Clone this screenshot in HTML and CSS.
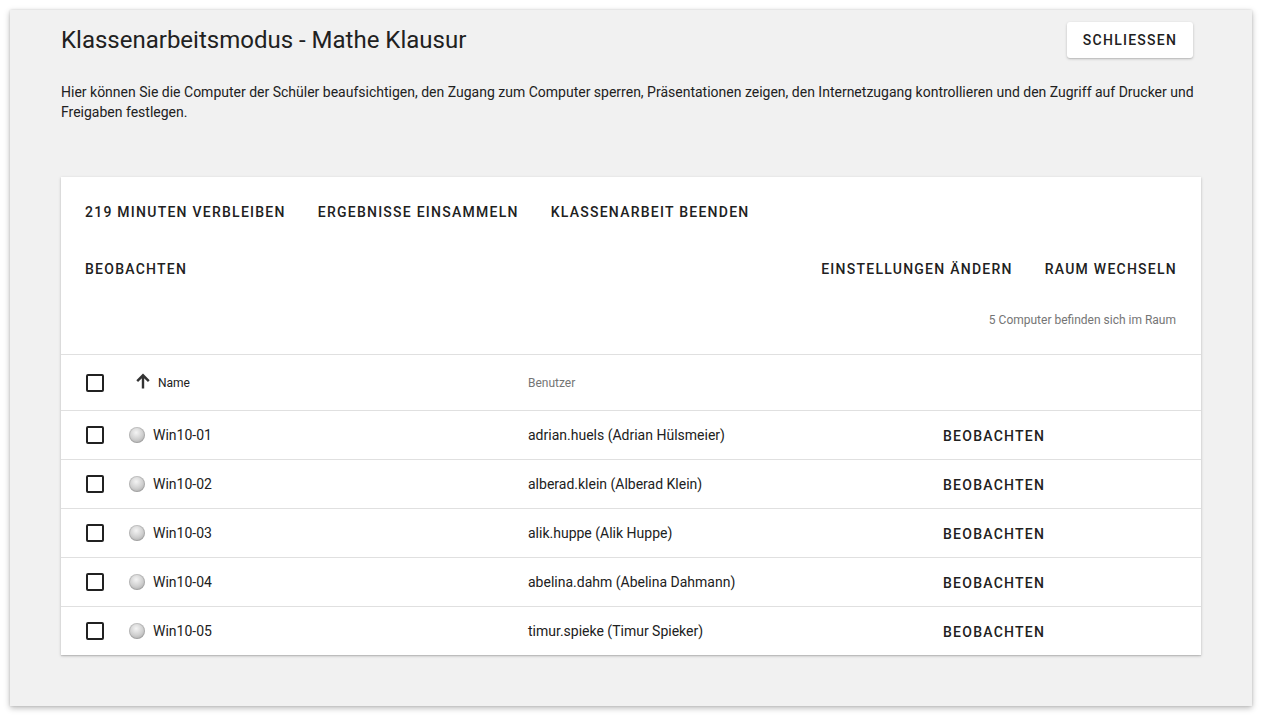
FILE: index.html
```html
<!DOCTYPE html>
<html lang="de">
<head>
<meta charset="utf-8">
<title>Klassenarbeitsmodus</title>
<link rel="stylesheet" href="styles.css">
</head>
<body>
<div class="dialog">
  <div class="header">
    <h1 class="title">Klassenarbeitsmodus - Mathe Klausur</h1>
    <button class="close-btn">SCHLIESSEN</button>
  </div>
  <p class="desc">Hier können Sie die Computer der Schüler beaufsichtigen, den Zugang zum Computer sperren, Präsentationen zeigen, den Internetzugang kontrollieren und den Zugriff auf Drucker und Freigaben festlegen.</p>

  <div class="card">
    <div class="toolbar">
      <div class="tb-row">
        <span class="tbtn">219 MINUTEN VERBLEIBEN</span>
        <span class="tbtn">ERGEBNISSE EINSAMMELN</span>
        <span class="tbtn">KLASSENARBEIT BEENDEN</span>
      </div>
      <div class="tb-row tb-row2">
        <span class="tbtn">BEOBACHTEN</span>
        <span class="spacer"></span>
        <span class="tbtn">EINSTELLUNGEN ÄNDERN</span>
        <span class="tbtn">RAUM WECHSELN</span>
      </div>
      <div class="count">5 Computer befinden sich im Raum</div>
    </div>

    <div class="table">
      <div class="row head">
        <span class="cb"></span>
        <span class="c-name"><svg class="arrow" viewBox="0 0 14 16" width="14" height="16"><path d="M7 15.5V2.5M1.2 8.2L7 2.3l5.8 5.9" fill="none" stroke="#333" stroke-width="2.4"/></svg>Name</span>
        <span class="c-user">Benutzer</span>
        <span class="c-act"></span>
      </div>
      <div class="row">
        <span class="cb"></span>
        <span class="c-name"><i class="dot"></i>Win10-01</span>
        <span class="c-user">adrian.huels (Adrian Hülsmeier)</span>
        <span class="c-act">BEOBACHTEN</span>
      </div>
      <div class="row">
        <span class="cb"></span>
        <span class="c-name"><i class="dot"></i>Win10-02</span>
        <span class="c-user">alberad.klein (Alberad Klein)</span>
        <span class="c-act">BEOBACHTEN</span>
      </div>
      <div class="row">
        <span class="cb"></span>
        <span class="c-name"><i class="dot"></i>Win10-03</span>
        <span class="c-user">alik.huppe (Alik Huppe)</span>
        <span class="c-act">BEOBACHTEN</span>
      </div>
      <div class="row">
        <span class="cb"></span>
        <span class="c-name"><i class="dot"></i>Win10-04</span>
        <span class="c-user">abelina.dahm (Abelina Dahmann)</span>
        <span class="c-act">BEOBACHTEN</span>
      </div>
      <div class="row last">
        <span class="cb"></span>
        <span class="c-name"><i class="dot"></i>Win10-05</span>
        <span class="c-user">timur.spieke (Timur Spieker)</span>
        <span class="c-act">BEOBACHTEN</span>
      </div>
    </div>
  </div>
</div>
</body>
</html>
```

FILE: styles.css
```css
* { box-sizing: border-box; }
html, body { margin: 0; padding: 0; background: #ffffff; }
body {
  font-family: Roboto, "Liberation Sans", sans-serif;
  color: #212121;
  width: 1262px;
  height: 716px;
  overflow: hidden;
}
.dialog {
  margin: 10px;
  width: 1242px;
  height: 696px;
  background: #f1f1f1;
  box-shadow: 0 2px 6px rgba(0,0,0,0.28), 0 0 2px rgba(0,0,0,0.12);
  padding: 12px 51px 0 51px;
}
.header {
  display: flex;
  align-items: center;
  justify-content: space-between;
  height: 36px;
}
.title {
  margin: 0;
  font-size: 24px;
  font-weight: 400;
  line-height: 32px;
  color: #212121;
}
.close-btn {
  margin-right: 8px;
  margin-top: -1px;
  height: 36px;
  width: 126px;
  border: none;
  background: #fff;
  border-radius: 3px;
  box-shadow: 0 1px 3px rgba(0,0,0,0.2), 0 1px 1px rgba(0,0,0,0.08);
  font-family: inherit;
  font-size: 14px;
  font-weight: 500;
  letter-spacing: 1.25px;
  color: #212121;
  padding: 0;
}
.desc {
  margin: 24px 0 0 0;
  font-size: 14px;
  line-height: 20px;
  color: #212121;
}
.card {
  margin-top: 55px;
  background: #fff;
  box-shadow: 0 1px 3px rgba(0,0,0,0.2), 0 1px 1px rgba(0,0,0,0.1);
}
.toolbar {
  padding: 17px 24px 0 24px;
}
.tb-row {
  display: flex;
  align-items: center;
  height: 36px;
  gap: 32px;
}
.tb-row2 { margin-top: 21px; }
.spacer { flex: 1; }
.tbtn {
  font-size: 14px;
  font-weight: 500;
  letter-spacing: 1.25px;
  color: #212121;
  white-space: nowrap;
}
.count {
  margin-top: 25px;
  padding-right: 1px;
  text-align: right;
  font-size: 12px;
  line-height: 16px;
  color: #757575;
  padding-bottom: 26px;
}
.table { border-top: 1px solid #e0e0e0; }
.row {
  display: flex;
  align-items: center;
  height: 49px;
  padding-left: 25px;
  border-bottom: 1px solid #e0e0e0;
  font-size: 14px;
}
.row.head { height: 56px; font-size: 12px; }
.row.last { border-bottom: none; height: 48px; }
.cb {
  width: 18px;
  height: 18px;
  border: 2px solid #212121;
  border-radius: 2px;
  flex: none;
}
.c-name {
  margin-left: 25px;
  width: 399px;
  display: flex;
  align-items: center;
}
.head .c-name { padding-left: 7px; }
.arrow { margin-right: 8px; margin-top: -3px; }
.dot {
  width: 16px;
  height: 16px;
  border-radius: 50%;
  margin-right: 8px;
  background: radial-gradient(circle at 45% 35%, #f4f4f4 0%, #cfcfcf 50%, #9a9a9a 100%);
  box-shadow: inset 0 0 0 1px rgba(0,0,0,0.12);
}
.c-user { width: 415px; }
.head .c-user { color: #757575; }
.c-act {
  font-size: 14px;
  font-weight: 500;
  letter-spacing: 1.25px;
  padding-top: 2px;
}
```
